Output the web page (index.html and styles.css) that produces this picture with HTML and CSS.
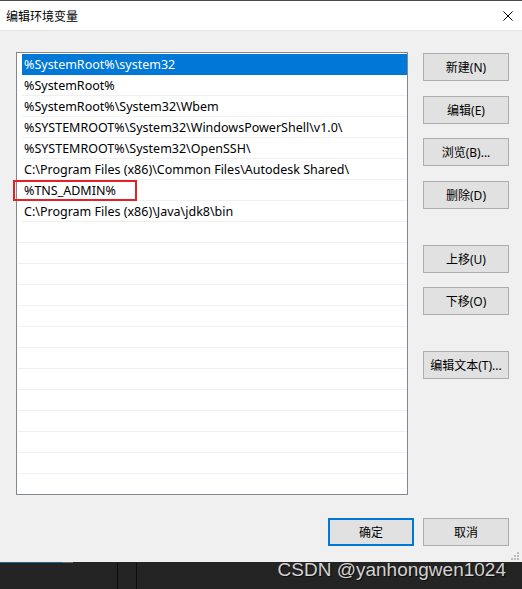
FILE: index.html
```html
<!DOCTYPE html>
<html lang="zh-CN">
<head>
    <meta charset="UTF-8">
    <title>编辑环境变量</title>
    <link rel="stylesheet" href="styles.css">
</head>
<body>
    <div class="screen">
        <div class="topline"></div>
        <div class="titlebar">
            <span class="title">编辑环境变量</span>
            <svg class="close" width="10" height="10" viewBox="0 0 10 10">
                <path d="M0.5 0.5 L9.5 9.5 M9.5 0.5 L0.5 9.5" stroke="#000" stroke-width="1" fill="none"/>
            </svg>
        </div>

        <div class="dialog">
            <div class="main">
                <div class="pathlist">
                    <div class="row selected">%SystemRoot%\system32</div>
                    <div class="row">%SystemRoot%</div>
                    <div class="row">%SystemRoot%\System32\Wbem</div>
                    <div class="row">%SYSTEMROOT%\System32\WindowsPowerShell\v1.0\</div>
                    <div class="row">%SYSTEMROOT%\System32\OpenSSH\</div>
                    <div class="row">C:\Program Files (x86)\Common Files\Autodesk Shared\</div>
                    <div class="row marked">%TNS_ADMIN%<span class="mark"></span></div>
                    <div class="row">C:\Program Files (x86)\Java\jdk8\bin</div>
                    <div class="row empty"></div>
                    <div class="row empty"></div>
                    <div class="row empty"></div>
                    <div class="row empty"></div>
                    <div class="row empty"></div>
                    <div class="row empty"></div>
                    <div class="row empty"></div>
                    <div class="row empty"></div>
                    <div class="row empty"></div>
                    <div class="row empty"></div>
                    <div class="row empty"></div>
                    <div class="row empty"></div>
                </div>

                <div class="side">
                    <button class="btn">新建(N)</button>
                    <button class="btn gap-15">编辑(E)</button>
                    <button class="btn gap-14">浏览(B)...</button>
                    <button class="btn gap-15">删除(D)</button>
                    <button class="btn gap-36">上移(U)</button>
                    <button class="btn gap-14">下移(O)</button>
                    <button class="btn gap-36">编辑文本(T)...</button>
                </div>
            </div>

            <div class="footer">
                <button class="btn default">确定</button>
                <button class="btn">取消</button>
            </div>

            <svg class="grip" width="9" height="9" viewBox="0 0 9 9">
                <rect x="6" y="0" width="2" height="2" fill="#bcbcbc"/>
                <rect x="3" y="3" width="2" height="2" fill="#bcbcbc"/>
                <rect x="6" y="3" width="2" height="2" fill="#bcbcbc"/>
                <rect x="0" y="6" width="2" height="2" fill="#bcbcbc"/>
                <rect x="3" y="6" width="2" height="2" fill="#bcbcbc"/>
                <rect x="6" y="6" width="2" height="2" fill="#bcbcbc"/>
            </svg>
        </div>

        <div class="taskbar">
            <div class="task-active"></div>
            <div class="task-sep first"></div>
            <div class="task-sep second"></div>
            <span class="watermark">CSDN @yanhongwen1024</span>
        </div>
    </div>
</body>
</html>
```

FILE: styles.css
```css
/* Page */
body {
    margin: 0;
    padding: 0;
    background-color: #f0f0f0;
    font-family: "Noto Sans", "Noto Sans CJK SC", sans-serif;
    font-size: 12px;
    color: #000;
}

.screen {
    width: 522px;
    height: 589px;
    display: flex;
    flex-direction: column;
    overflow: hidden;
}

/* Window title */
.topline {
    height: 1px;
    background-color: #4b4b4b;
}

.titlebar {
    height: 29px;
    background-color: #fff;
    border-bottom: 1px solid #e6e6e6;
    display: flex;
    align-items: center;
    justify-content: space-between;
    padding: 0 9px 0 6px;
}

.title {
    font-family: "Noto Sans CJK SC", sans-serif;
    font-size: 12px;
    line-height: 14px;
}

.close {
    display: block;
}

/* Dialog body */
.dialog {
    position: relative;
    flex: 1;
    background-color: #f0f0f0;
    padding: 21px 13px 0 16px;
}

.main {
    display: grid;
    grid-template-columns: 392px 86px;
    column-gap: 15px;
}

.pathlist {
    height: 440px;
    background-color: #fff;
    border: 1px solid #828790;
    padding-top: 1px;
}

.row {
    position: relative;
    height: 20px;
    line-height: 21px;
    margin-left: 5px;
    padding-left: 2px;
    border-bottom: 1px solid #f0f0f0;
    font-size: 12.5px;
    white-space: nowrap;
}

.row.empty {
    margin-left: 1px;
}

.row.selected {
    background-color: #0078d7;
    border-bottom-color: #0078d7;
    color: #fff;
}

.mark {
    position: absolute;
    left: -9px;
    top: 0;
    width: 120px;
    height: 17px;
    border: 2px solid #e2222a;
}

/* Buttons */
.btn {
    display: block;
    width: 86px;
    height: 28px;
    margin: 0;
    padding: 0;
    background-color: #e1e1e1;
    border: 1px solid #adadad;
    font-family: "Noto Sans", "Noto Sans CJK SC", sans-serif;
    font-size: 12px;
    color: #000;
}

.side {
    padding-top: 1px;
}

.gap-14 { margin-top: 14px; }
.gap-15 { margin-top: 15px; }
.gap-36 { margin-top: 36px; }

.footer {
    display: flex;
    justify-content: flex-end;
    gap: 9px;
    margin-top: 23px;
}

.btn.default {
    border: 2px solid #0078d7;
}

.grip {
    position: absolute;
    right: 2px;
    bottom: 1px;
}

/* Taskbar strip below the window */
.taskbar {
    position: relative;
    height: 27px;
    background-color: #242424;
}

.task-active {
    width: 73px;
    height: 1px;
    background: linear-gradient(to right, #1b6590 63px, #6b6b6b 63px);
}

.task-sep {
    position: absolute;
    top: 1px;
    bottom: 0;
    width: 1px;
    background-color: #0c0c0c;
}

.task-sep.first { left: 117px; }
.task-sep.second { left: 136px; }

.watermark {
    position: absolute;
    right: 16px;
    top: -3px;
    font-family: "Liberation Sans", Arial, sans-serif;
    font-size: 19px;
    color: #d2d2d2;
    text-shadow: 1px 1px 1px rgba(0, 0, 0, 0.7);
    white-space: nowrap;
}
```
